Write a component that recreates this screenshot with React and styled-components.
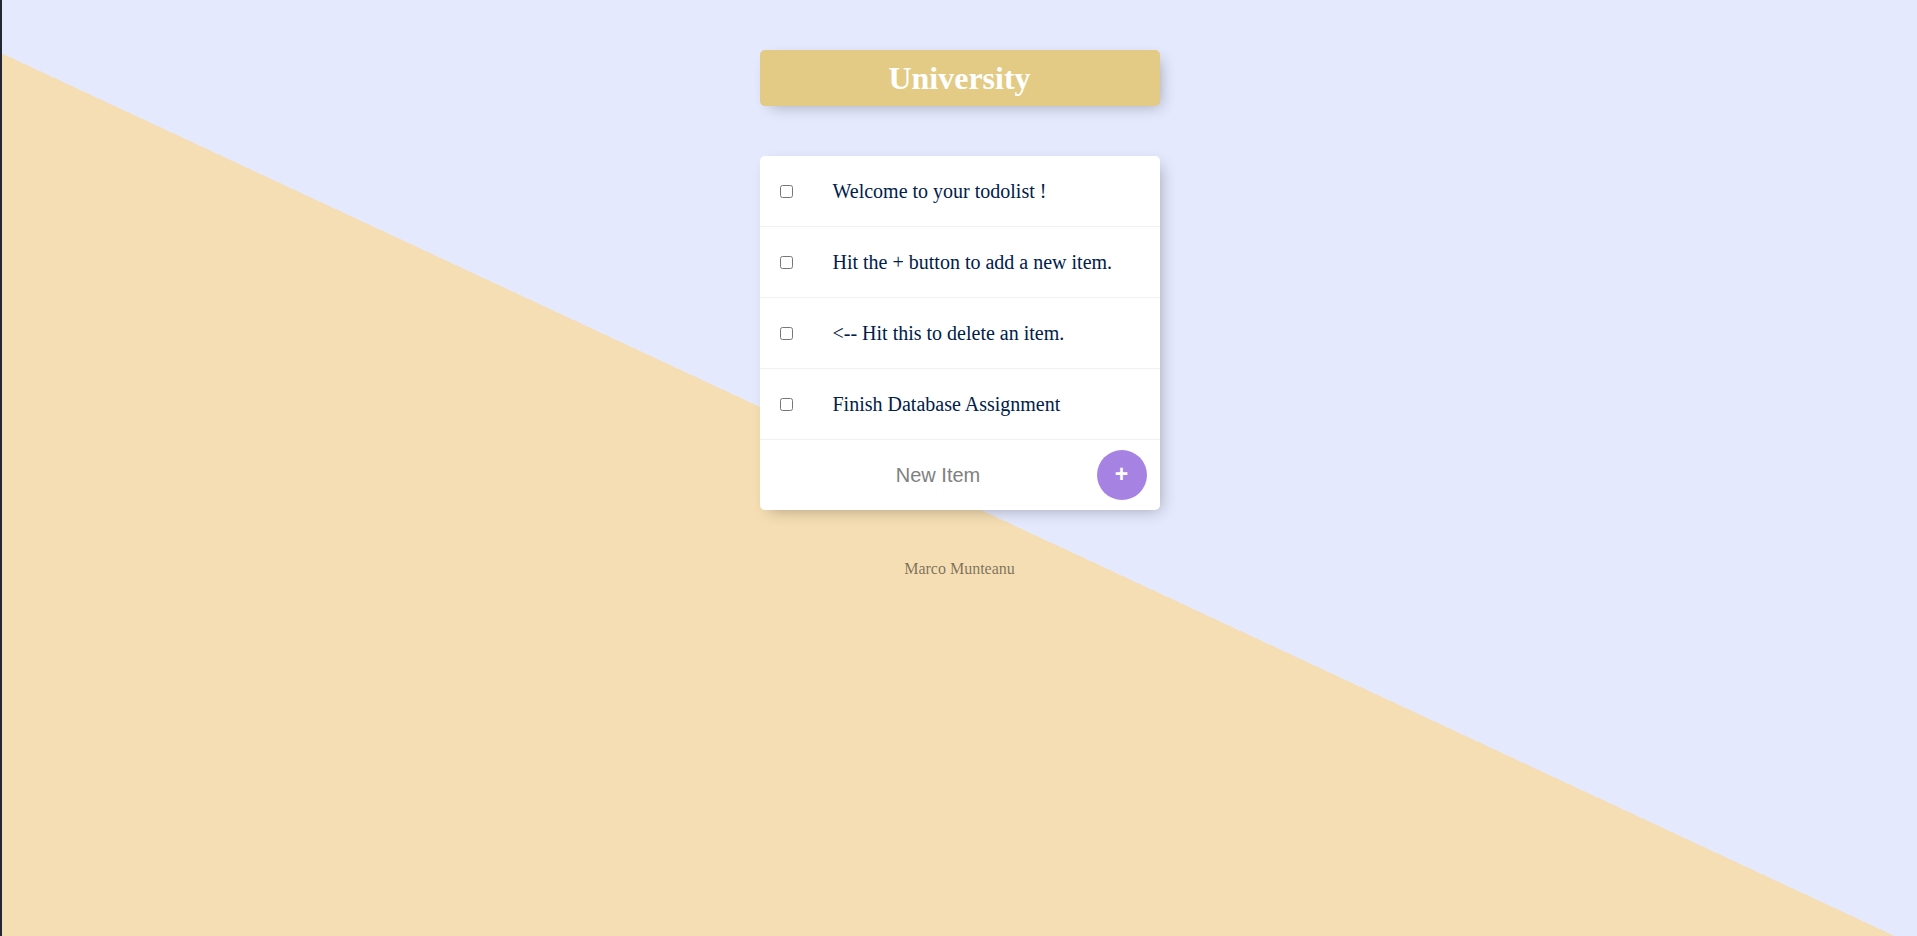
import React from 'react';
import styled, { createGlobalStyle } from 'styled-components';

const GlobalStyle = createGlobalStyle`
  html {
    min-height: 100%;
    border-left: 2px solid #232733;
    background-color: #e4e9fd;
    background-image: linear-gradient(25deg, #f5deb3 50%, #e4e9fd 50%);
    background-size: 100% 1000px;
    background-repeat: no-repeat;
    font-family: "Liberation Serif", "Times New Roman", serif;
  }

  body {
    margin: 0 8px 8px;
  }

  ::placeholder {
    color: grey;
    opacity: 1;
  }
`;

const Box = styled.div`
  max-width: 400px;
  margin: 50px auto;
  background: ${(p) => p.$bg || 'white'};
  border-radius: 5px;
  box-shadow: 5px 5px 15px -5px rgba(0, 0, 0, 0.3);
  text-align: ${(p) => (p.$center ? 'center' : 'left')};
`;

const Title = styled.h1`
  margin: 0;
  padding: 10px;
  color: #fff;
  font-size: 32px;
  line-height: 36px;
  font-weight: bold;
`;

const Item = styled.div`
  min-height: 70px;
  display: flex;
  align-items: center;
  border-bottom: 1px solid #f1f1f1;
`;

const Check = styled.input`
  margin: 20px;
  width: 13px;
  height: 13px;
`;

const ItemText = styled.p`
  margin: 0;
  padding: 20px;
  font-size: 20px;
  font-weight: 200;
  color: #00204a;
`;

const NewItemForm = styled.form`
  min-height: 70px;
  display: flex;
  align-items: center;
  margin-left: 20px;
  text-align: center;
`;

const NewItemInput = styled.input`
  text-align: center;
  height: 60px;
  width: 313px;
  padding: 1px 2px;
  border: none;
  background: transparent;
  font-family: "Liberation Sans", Arial, sans-serif;
  font-size: 20px;
  font-weight: 200;
  color: #00204a;

  &:focus {
    outline: none;
    box-shadow: inset 0 -3px 0 0 #a683e3;
  }
`;

const AddButton = styled.button`
  display: flex;
  align-items: center;
  justify-content: center;
  height: 50px;
  width: 50px;
  padding: 0 0 2px;
  border: 0;
  border-radius: 50%;
  background-color: #a683e3;
  color: #fff;
  font-family: "Liberation Sans", Arial, sans-serif;
  font-size: 23px;
  font-weight: bold;
  line-height: 1;
`;

const Footer = styled.footer`
  color: rgba(0, 0, 0, 0.5);
  text-align: center;
  font-size: 16px;
`;

const items = [
  'Welcome to your todolist !',
  'Hit the + button to add a new item.',
  '<-- Hit this to delete an item.',
  'Finish Database Assignment',
];

export default function App() {
  return (
    <>
      <GlobalStyle />
      <Box $bg="#e3cb85" $center>
        <Title>University</Title>
      </Box>
      <Box>
        {items.map((text) => (
          <Item key={text}>
            <Check type="checkbox" />
            <ItemText>{text}</ItemText>
          </Item>
        ))}
        <NewItemForm onSubmit={(e) => e.preventDefault()}>
          <NewItemInput type="text" placeholder="New Item" autoComplete="off" />
          <AddButton type="submit">+</AddButton>
        </NewItemForm>
      </Box>
      <Footer>Marco Munteanu</Footer>
    </>
  );
}
